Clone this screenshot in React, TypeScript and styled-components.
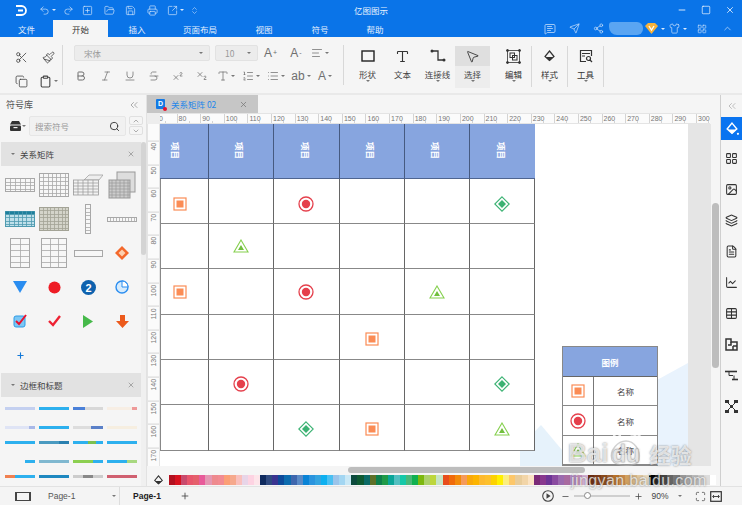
import React from 'react';
import styled, { createGlobalStyle } from 'styled-components';
import {
  Undo2, Redo2, SquarePlus, FolderOpen, Save, Printer, SquareArrowOutUpRight, ChevronsUpDown, Minus, Square, X,
  MessageSquareText, Send, Share2, Shirt, LayoutGrid, ChevronUp, ChevronDown, ChevronsLeft, Scissors, Paintbrush,
  Copy, Clipboard, Bold, Italic, Underline, Strikethrough, Superscript, Subscript, AlignLeft, List, ListOrdered,
  Type, MousePointer2, Search, Image, Layers, FileText, LineChart, Table, Plus, Maximize,
} from 'lucide-react';

const GlobalStyle = createGlobalStyle`
  html, body { margin: 0; padding: 0; background: #fff; }
  * { box-sizing: border-box; }
  body { font-family: "Noto Sans CJK SC", "Liberation Sans", sans-serif; }
`;

const Screen = styled.div`
  position: relative;
  width: 742px;
  height: 505px;
  overflow: hidden;
  display: flex;
  flex-direction: column;
  background: #f5f5f5;
  color: #444;
  font-size: 8.5px;
`;

/* ---- title bar ---- */
const TopBar = styled.div`
  height: 20px;
  background: #0a74e8;
  color: #fff;
  display: grid;
  grid-template-columns: 1fr auto 1fr;
  align-items: center;
`;
const QuickTools = styled.div`
  display: flex;
  align-items: center;
  padding-left: 13px;
`;
const QuickBtn = styled.span<{ $w?: number }>`
  width: ${p => p.$w ?? 21.5}px;
  display: flex;
  align-items: center;
  justify-content: center;
  gap: 2px;
  color: #cfe3fb;
`;
const AppTitle = styled.div`
  font-size: 8.5px;
  color: #e8f2fe;
`;
const WinControls = styled.div`
  display: flex;
  justify-content: flex-end;
  gap: 14px;
  padding-right: 7px;
  color: #fff;
`;
const Caret = styled.i<{ $light?: boolean }>`
  display: inline-block;
  width: 0;
  height: 0;
  border-left: 2px solid transparent;
  border-right: 2px solid transparent;
  border-top: 2.5px solid ${p => (p.$light ? '#dcebfd' : '#777')};
`;

const MenuBar = styled.div`
  height: 17px;
  background: #0a74e8;
  display: flex;
  align-items: stretch;
`;
const MenuTab = styled.div<{ $w: number; $active?: boolean }>`
  width: ${p => p.$w}px;
  display: flex;
  align-items: center;
  justify-content: center;
  font-size: 8.5px;
  color: ${p => (p.$active ? '#333' : '#e4effd')};
  background: ${p => (p.$active ? '#f5f5f5' : 'transparent')};
`;
const MenuRight = styled.div`
  margin-left: auto;
  display: flex;
  align-items: center;
  padding-right: 1px;
  color: #cfe3fb;
`;
const MenuIcon = styled.span<{ $w?: number }>`
  width: ${p => p.$w ?? 25}px;
  display: flex;
  align-items: center;
  justify-content: center;
  gap: 3px;
`;
const Blurred = styled.span`
  width: 34px;
  height: 13px;
  margin: 0 1px 0 -1px;
  border-radius: 3px 6px 6px 8px;
  background: #5aa5f2;
`;

/* ---- ribbon ---- */
const Ribbon = styled.div`
  height: 58px;
  padding-bottom: 2px;
  display: flex;
  background: #f5f5f5;
  border-bottom: 2px solid #e9e9e9;
`;
const ClipGroup = styled.div`
  width: 63px;
  margin: 8px 0 6px;
  padding-left: 8px;
  border-right: 1px solid #d8d8d8;
  display: grid;
  grid-template-columns: 26px 28px;
  grid-auto-rows: 24px;
  align-items: center;
  justify-items: center;
`;
const RibbonBtn = styled.span<{ $w?: number; $pale?: boolean }>`
  width: ${p => (p.$w ? `${p.$w}px` : 'auto')};
  display: flex;
  align-items: center;
  justify-content: center;
  gap: 2px;
  font: 12px "Liberation Sans", sans-serif;
  color: ${p => (p.$pale ? '#6f6f6f' : '#444')};
  sup { font-size: 7px; line-height: 0; margin-left: -1px; }
`;
const FontGroup = styled.div`
  width: 281px;
  margin: 8px 0 6px;
  padding-left: 6px;
  border-right: 1px solid #d8d8d8;
  display: flex;
  flex-direction: column;
  gap: 7px;
`;
const FontRow = styled.div`
  height: 16px;
  display: flex;
  align-items: center;
`;
const SelectBox = styled.div<{ $w: number; $ml?: number }>`
  width: ${p => p.$w}px;
  height: 16px;
  margin-left: ${p => p.$ml ?? 0}px;
  padding: 0 6px 0 9px;
  background: #ececec;
  border: 1px solid #e2e2e2;
  border-radius: 2px;
  display: flex;
  align-items: center;
  justify-content: space-between;
  color: #999;
  font-size: 8.5px;
`;
const BigTools = styled.div`
  display: flex;
  padding: 9px 0 0 6px;
  width: 152px;
`;
const BigTool = styled.div<{ $w?: number; $active?: boolean }>`
  width: ${p => p.$w ?? 35}px;
  height: 42px;
  display: flex;
  flex-direction: column;
  align-items: center;
  font-size: 8.5px;
  color: #444;
  background: ${p => (p.$active ? '#ededed' : 'transparent')};
`;
const BigIcon = styled.span<{ $active?: boolean }>`
  align-self: stretch;
  height: 20px;
  display: flex;
  align-items: center;
  justify-content: center;
  color: #333;
  background: ${p => (p.$active ? '#dfdfdf' : 'transparent')};
`;
const BigLabel = styled.span`
  margin-top: 3px;
  line-height: 11px;
`;
const SideGroup = styled.div`
  width: 36px;
  margin-top: 9px;
  height: 41px;
  border-right: 1px solid #d8d8d8;
  display: flex;
  flex-direction: column;
  align-items: center;
  color: #333;
  font-size: 8.5px;
`;

/* ---- workspace ---- */
const Workspace = styled.div`
  flex: 1;
  min-height: 0;
  display: flex;
`;
const LeftPanel = styled.div`
  width: 147px;
  padding-left: 1px;
  border-right: 1px solid #e2e2e2;
  display: flex;
  flex-direction: column;
`;
const PanelTitle = styled.div`
  height: 19px;
  padding: 0 6px 0 5px;
  display: flex;
  align-items: center;
  justify-content: space-between;
  font-size: 9px;
  color: #555;
`;
const SearchRow = styled.div`
  height: 28px;
  padding: 2px 0 0 9px;
  display: flex;
  align-items: flex-start;
`;
const DrawerSlot = styled.span`
  height: 20px;
  display: flex;
  align-items: center;
  gap: 1px;
`;
const SearchBox = styled.div`
  width: 97px;
  height: 20px;
  margin-left: 3px;
  padding: 0 5px;
  background: #f1f1f1;
  border: 1px solid #e6e6e6;
  border-radius: 2px;
  display: flex;
  align-items: center;
  justify-content: space-between;
  color: #999;
`;
const Steppers = styled.div`
  margin-left: 3px;
  display: flex;
  flex-direction: column;
  gap: 1px;
`;
const Stepper = styled.span`
  width: 14px;
  height: 9px;
  border: 1px solid #e0e0e0;
  border-radius: 2px;
  display: flex;
  align-items: center;
  justify-content: center;
  color: #888;
`;
const PanelBody = styled.div`
  flex: 1;
  display: flex;
  min-height: 0;
`;
const PanelList = styled.div`
  width: 140px;
`;
const PanelScroll = styled.div`
  width: 5px;
  background: #f0f0f0;
`;
const PanelThumb = styled.div`
  height: 113px;
  background: #d4d4d4;
  border-radius: 3px;
`;
const SectionHead = styled.div`
  height: 24px;
  padding: 0 6px 0 10px;
  background: #e2e2e2;
  display: flex;
  align-items: center;
  gap: 5px;
  color: #444;
  font-size: 8.5px;
`;
const SectionClose = styled.span`
  margin-left: auto;
  display: flex;
  color: #888;
`;
const SymbolGrid = styled.div`
  padding: 2px 0 1px 2px;
  display: grid;
  grid-template-columns: repeat(4, 34px);
  grid-auto-rows: 34px;
  align-items: center;
  justify-items: center;
`;
const BorderGrid = styled.div`
  padding: 0 3px 0 4px;
  display: grid;
  grid-template-columns: repeat(4, 30px);
  grid-template-rows: 22px 16px 14px 24px 6px;
  column-gap: 4px;
  align-items: center;
`;
const Strip = styled.div`
  height: 3px;
  display: flex;
  align-items: stretch;
`;
const StripPart = styled.span<{ $c: string; $g: number }>`
  flex: ${p => p.$g};
  background: ${p => p.$c};
`;

const CenterColumn = styled.div`
  width: 573px;
  display: flex;
  flex-direction: column;
`;
const DocTabs = styled.div`
  height: 18px;
  display: flex;
`;
const DocTab = styled.div`
  width: 111px;
  background: #c6c6c6;
  padding: 0 10px 0 9px;
  display: flex;
  align-items: center;
  color: #1f86ea;
  font-size: 8.5px;
`;
const DocIcon = styled.span`
  position: relative;
  width: 9px;
  height: 10px;
  margin-right: 6px;
  border-radius: 1px;
  background: #1479e4;
  color: #fff;
  font: bold 7px/10px "Liberation Sans", sans-serif;
  text-align: center;
  &::after {
    content: '';
    position: absolute;
    right: -2px;
    bottom: -2px;
    width: 4px;
    height: 4px;
    border-radius: 50%;
    background: #e8112d;
  }
`;
const DocClose = styled.span`
  margin-left: auto;
  display: flex;
  color: #777;
`;
const RulerRow = styled.div`
  height: 11px;
  display: flex;
  background: #f5f5f5;
`;
const RulerCorner = styled.div`
  width: 13px;
  background: #ededed;
`;
const HRuler = styled.div`
  width: 550px;
  overflow: hidden;
  display: flex;
  background: #fbfbfb;
  border-top: 1px solid #e4e4e4;
  border-bottom: 1px solid #e4e4e4;
`;
const HTick = styled.span`
  position: relative;
  flex: 0 0 23.62px;
  padding-left: 1px;
  border-left: 1px solid #d4d4d4;
  font: 7px/9px "Liberation Sans", sans-serif;
  color: #777;
  &:first-child { margin-left: -7px; }
  &::after {
    content: '';
    position: absolute;
    left: 11px;
    bottom: 0;
    height: 2px;
    border-left: 1px solid #d4d4d4;
  }
`;
const CanvasRow = styled.div`
  flex: 1;
  min-height: 0;
  display: flex;
`;
const VRuler = styled.div`
  width: 13px;
  overflow: hidden;
  background: #fbfbfb;
  border-right: 1px solid #e4e4e4;
  border-left: 1px solid #e4e4e4;
`;
const VTick = styled.span`
  display: block;
  height: 23.62px;
  border-bottom: 1px solid #d4d4d4;
  writing-mode: vertical-rl;
  transform: rotate(180deg);
  font: 7px/11px "Liberation Sans", sans-serif;
  color: #777;
  text-align: right;
  padding-bottom: 1px;
  &:first-child { margin-top: 17px; }
`;
const Page = styled.div`
  position: relative;
  width: 528px;
  overflow: hidden;
  background: #fff;
`;
const PaleShapes = styled.svg`
  position: absolute;
  inset: 0;
`;
const Matrix = styled.div`
  position: relative;
  width: 375px;
  display: grid;
  grid-template-columns: 49px 65px 66px 65px 65px 65px;
  grid-template-rows: 55px 45px 45px 46px 45px 45px 46px;
`;
const HeadCell = styled.div`
  background: #87a5df;
  border-right: 1px solid #465a80;
  border-bottom: 1px solid #4f6590;
  display: flex;
  align-items: center;
  justify-content: center;
  padding-right: 17px;
  &:nth-child(n + 2) { padding-right: 2px; }
  &:nth-child(6) { border-right: 0; }
`;
const HeadText = styled.span`
  writing-mode: vertical-rl;
  text-orientation: sideways;
  color: #fff;
  font-size: 8.5px;
  font-weight: 700;
`;
const Cell = styled.div<{ $first: boolean; $dy: number }>`
  background: #fff;
  border-left: ${p => (p.$first ? '1px solid #888' : '0')};
  border-right: 1px solid #666;
  border-bottom: 1px solid #888;
  display: flex;
  align-items: center;
  justify-content: center;
  padding-right: ${p => (p.$first ? 9 : 1)}px;
  padding-top: ${p => p.$dy}px;
`;
const Legend = styled.div`
  position: absolute;
  left: 402px;
  top: 222px;
  width: 96px;
  display: grid;
  grid-template-columns: 31px 63px;
  grid-template-rows: 30px 29px 30px 29px;
  border: 1px solid #888;
`;
const LegendHead = styled.div`
  grid-column: 1 / 3;
  background: #87a5df;
  border-bottom: 1px solid #666;
  display: flex;
  align-items: center;
  justify-content: center;
  color: #fff;
  font-weight: 700;
  font-size: 8.5px;
`;
const LegendMark = styled.div`
  background: #fff;
  border-right: 1px solid #777;
  border-bottom: 1px solid #888;
  display: flex;
  align-items: center;
  justify-content: center;
`;
const LegendName = styled.div`
  background: #fff;
  border-bottom: 1px solid #888;
  display: flex;
  align-items: center;
  justify-content: center;
  color: #444;
  font-size: 8.5px;
`;
const Gutter = styled.div`
  width: 23px;
  background: #e5e5e5;
`;
const VScroll = styled.div`
  width: 9px;
  padding: 79px 1px 0 1px;
  background: #f5f5f5;
`;
const VThumb = styled.div`
  height: 165px;
  background: #bdbdbd;
  border-radius: 4px;
`;
const HScroll = styled.div`
  height: 8px;
  padding: 1px 0 0 201px;
  background: #f5f5f5;
`;
const HThumb = styled.div`
  width: 237px;
  height: 6px;
  background: #bdbdbd;
  border-radius: 3px;
`;
const ColorBar = styled.div`
  height: 12px;
  display: flex;
  align-items: center;
`;
const BucketSlot = styled.span`
  width: 22px;
  display: flex;
  justify-content: center;
  color: #333;
`;
const Swatch = styled.span<{ $c: string }>`
  width: 6.08px;
  height: 10px;
  background: ${p => p.$c};
`;

const RightRail = styled.div`
  width: 22px;
  border-left: 1px solid #cfcfcf;
  display: flex;
  flex-direction: column;
  align-items: center;
`;
const RailTop = styled.div`
  height: 22px;
  display: flex;
  align-items: center;
  color: #999;
`;
const RailItem = styled.div<{ $active?: boolean }>`
  align-self: stretch;
  height: ${p => (p.$active ? 23 : 31)}px;
  margin-bottom: ${p => (p.$active ? 3 : 0)}px;
  display: flex;
  align-items: center;
  justify-content: center;
  color: ${p => (p.$active ? '#fff' : '#333')};
  background: ${p => (p.$active ? '#0a74f0' : 'transparent')};
`;

/* ---- status bar ---- */
const StatusBar = styled.div`
  height: 19px;
  background: #f4f4f4;
  border-top: 1px solid #e2e2e2;
  display: flex;
  align-items: center;
  color: #444;
`;
const PagePicker = styled.div`
  width: 120px;
  height: 100%;
  padding: 0 3px 0 15px;
  border-right: 1px solid #ddd;
  display: flex;
  align-items: center;
  font: 8.5px "Liberation Sans", sans-serif;
  color: #555;
`;
const PageFrame = styled.span`
  width: 16px;
  height: 9px;
  margin-right: 17px;
  border: 1px solid #444;
  border-width: 1px 2px;
`;
const PageName = styled.span`
  flex: 1;
`;
const ActivePage = styled.span`
  margin-left: 13px;
  width: 47px;
  font: bold 8.5px "Liberation Sans", sans-serif;
  color: #222;
`;
const ZoomTools = styled.div`
  margin-left: auto;
  padding-right: 18px;
  display: flex;
  align-items: center;
`;
const ZoomSlot = styled.span<{ $w: number }>`
  width: ${p => p.$w}px;
  display: flex;
  align-items: center;
  justify-content: center;
  font: 8.5px "Liberation Sans", sans-serif;
  color: #444;
`;
const ZoomTrack = styled.span`
  position: relative;
  width: 56px;
  height: 2px;
  background: #cfcfcf;
`;
const ZoomKnob = styled.span`
  position: absolute;
  left: 10px;
  top: -3px;
  width: 7px;
  height: 7px;
  border-radius: 50%;
  background: #fff;
  border: 1px solid #888;
`;

/* ---- watermark ---- */
const Watermark = styled.div`
  position: absolute;
  left: 568px;
  top: 425px;
  width: 150px;
  height: 65px;
  pointer-events: none;
  color: rgba(255, 255, 255, 0.72);
  text-shadow: 0 0 2px rgba(80, 80, 80, 0.7);
  font-family: "Liberation Sans", sans-serif;
`;
const MarkLine = styled.div`
  display: flex;
  align-items: flex-end;
  height: 43px;
  font-size: 26px;
  line-height: 30px;
  font-weight: 700;
`;
const MarkCjk = styled.span`
  margin-left: 7px;
  font: 700 21px/28px "Noto Sans CJK SC", sans-serif;
`;
const MarkUrl = styled.div`
  margin: 3px 0 0 3px;
  font-size: 16px;
  line-height: 19px;
  letter-spacing: 0.4px;
  white-space: nowrap;
`;

/* marks in the matrix */
type Kind = 's' | 'c' | 'd' | 't' | '';

const Mark = ({ k }: { k: Kind }) => {
  if (k === 's')
    return (
      <svg width="14" height="14" viewBox="0 0 14 14">
        <rect x="1" y="1" width="12" height="12" fill="#fff" stroke="#fb8c55" strokeWidth="1.2" />
        <rect x="3.5" y="3.5" width="7" height="7" fill="#fb8c55" />
      </svg>
    );
  if (k === 'c')
    return (
      <svg width="16" height="16" viewBox="0 0 16 16">
        <circle cx="8" cy="8" r="7" fill="#fff" stroke="#e5404c" strokeWidth="1.3" />
        <circle cx="8" cy="8" r="4.2" fill="#e5404c" />
      </svg>
    );
  if (k === 'd')
    return (
      <svg width="16" height="16" viewBox="0 0 16 16">
        <path d="M8 .8 15.2 8 8 15.2.8 8Z" fill="#fff" stroke="#3bb273" strokeWidth="1.1" />
        <path d="M8 4 12 8 8 12 4 8Z" fill="#3bb273" />
      </svg>
    );
  if (k === 't')
    return (
      <svg width="16" height="14" viewBox="0 0 16 14">
        <path d="M8 1 15 13H1Z" fill="#fff" stroke="#86d04f" strokeWidth="1.1" />
        <path d="M8 6 11 11H5Z" fill="#72bf3e" />
      </svg>
    );
  return null;
};

const GridThumb = ({ w, h, cols, rows, stroke = '#a8a8a8', fill = '#f7f7f7', head }: {
  w: number; h: number; cols: number; rows: number; stroke?: string; fill?: string; head?: string;
}) => (
  <svg width={w} height={h} viewBox={`0 0 ${w} ${h}`}>
    <rect x=".5" y=".5" width={w - 1} height={h - 1} fill={fill} stroke={stroke} />
    {head && <rect x=".5" y=".5" width={w - 1} height={3} fill={head} />}
    {Array.from({ length: cols - 1 }, (_, i) => {
      const x = Math.round(((i + 1) * w) / cols) + 0.5;
      return <line key={i} x1={x} x2={x} y1="0" y2={h} stroke={stroke} strokeWidth=".8" />;
    })}
    {Array.from({ length: rows - 1 }, (_, i) => {
      const y = Math.round(((i + 1) * h) / rows) + 0.5;
      return <line key={i} x1="0" x2={w} y1={y} y2={y} stroke={stroke} strokeWidth=".8" />;
    })}
  </svg>
);

const Stacked = () => (
  <svg width="28" height="28" viewBox="0 0 28 28">
    <rect x="9" y="1" width="18" height="20" fill="#ddd" stroke="#999" />
    <rect x="1" y="9" width="21" height="18" fill="#ccc" stroke="#999" />
    {[4, 8, 12, 16, 20].map(x => <line key={x} x1={x} x2={x} y1="9" y2="27" stroke="#999" strokeWidth=".7" />)}
    {[12, 15, 18, 21, 24].map(y => <line key={y} x1="1" x2="22" y1={y} y2={y} stroke="#999" strokeWidth=".7" />)}
  </svg>
);

const Skewed = () => (
  <svg width="30" height="22" viewBox="0 0 30 22">
    <path d="M11 6 16 1H30L26 6Z" fill="#eee" stroke="#999" strokeWidth=".7" />
    <rect x=".5" y="6" width="25" height="15" fill="#f2f2f2" stroke="#999" strokeWidth=".8" />
    {[5, 10, 15, 20].map(x => <line key={x} x1={x} x2={x} y1="6" y2="21" stroke="#999" strokeWidth=".7" />)}
    {[9, 12, 15, 18].map(y => <line key={y} x1="0" x2="25" y1={y} y2={y} stroke="#999" strokeWidth=".7" />)}
  </svg>
);

const EditIcon = () => (
  <svg width="15" height="15" viewBox="0 0 15 15" fill="none" stroke="#333">
    <rect x="1.5" y="1.5" width="12" height="12" strokeWidth=".8" />
    <rect x="4" y="4" width="4.5" height="4.5" strokeWidth="1" />
    <rect x="6.5" y="6.5" width="4.5" height="4.5" strokeWidth="1" />
    {[1.5, 13.5].map(x => [1.5, 13.5].map(y => <circle key={`${x}${y}`} cx={x} cy={y} r="1" fill="#333" />))}
  </svg>
);

const ToolIcon = () => (
  <svg width="14" height="14" viewBox="0 0 14 14" fill="none" stroke="#333" strokeWidth="1.2">
    <path d="M7 12.5H1.5V1.5H12.5V7" />
    <path d="M3 4.5H11M3 7H6" strokeWidth="1" />
    <circle cx="9.5" cy="9.5" r="2" />
    <path d="M11 11 13 13" />
  </svg>
);

const BlockIcon = () => (
  <svg width="13" height="13" viewBox="0 0 13 13" fill="none" stroke="currentColor" strokeWidth="1.5">
    <path d="M1 1H6V4H12V12H1Z" />
    <path d="M6 4V7H3M8 8V12M8 8H12" />
  </svg>
);

const StepIcon = () => (
  <svg width="13" height="13" viewBox="0 0 13 13" fill="none" stroke="currentColor" strokeWidth="1.6">
    <path d="M0 2.5H12" />
    <path d="M4 2.5V6.5H8" strokeWidth="1" />
    <path d="M7 10.5H13" />
    <path d="M9 6.5V10.5" strokeWidth="1" />
  </svg>
);

const LinkIcon = () => (
  <svg width="13" height="13" viewBox="0 0 13 13" fill="currentColor">
    <path d="M2 2 11 11M11 2 2 11" stroke="currentColor" strokeWidth="1" />
    <rect x="0" y="0" width="4" height="3" />
    <rect x="9" y="0" width="4" height="3" />
    <rect x="0" y="10" width="4" height="3" />
    <rect x="9" y="10" width="4" height="3" />
    <rect x="5" y="5" width="3" height="3" />
  </svg>
);

const symbols: React.ReactNode[] = [
  <GridThumb w={30} h={14} cols={6} rows={4} />,
  <GridThumb w={30} h={24} cols={7} rows={6} />,
  <Skewed />,
  <Stacked />,
  <GridThumb w={30} h={16} cols={7} rows={5} stroke="#4f9bb0" fill="#bfe0ea" head="#1d7f9c" />,
  <GridThumb w={30} h={24} cols={8} rows={7} stroke="#a3a396" fill="#d4d4ca" />,
  <GridThumb w={6} h={30} cols={1} rows={8} />,
  <GridThumb w={30} h={5} cols={10} rows={1} />,
  <GridThumb w={20} h={30} cols={2} rows={5} />,
  <GridThumb w={26} h={30} cols={3} rows={5} />,
  <GridThumb w={29} h={7} cols={1} rows={1} />,
  <svg width="14" height="14" viewBox="0 0 14 14">
    <path d="M7 0 14 7 7 14 0 7Z" fill="#f4682b" />
    <path d="M7 3.5 10.5 7 7 10.5 3.5 7Z" fill="#fdd0b0" />
  </svg>,
  <svg width="14" height="12" viewBox="0 0 14 12"><path d="M0 0H14L7 12Z" fill="#2a8df0" /></svg>,
  <svg width="13" height="13" viewBox="0 0 14 14"><circle cx="7" cy="7" r="6.5" fill="#ee1c25" /></svg>,
  <svg width="15" height="15" viewBox="0 0 15 15">
    <circle cx="7.5" cy="7.5" r="7.5" fill="#0f62ae" />
    <text x="7.5" y="11.5" textAnchor="middle" fontSize="11" fontWeight="700" fill="#fff" fontFamily="Liberation Sans">2</text>
  </svg>,
  <svg width="14" height="14" viewBox="0 0 14 14">
    <circle cx="7" cy="7" r="6" fill="#d6ebfc" stroke="#2a8df0" strokeWidth="1.4" />
    <path d="M7 7V1A6 6 0 0 1 13 7Z" fill="#fff" stroke="#2a8df0" />
  </svg>,
  <svg width="14" height="14" viewBox="0 0 14 14">
    <rect x="1" y="2" width="11" height="11" rx="2" fill="#7cc7f5" stroke="#2d9be5" />
    <path d="M3 7 6 10 13 1" fill="none" stroke="#e8112d" strokeWidth="2" />
  </svg>,
  <svg width="13" height="12" viewBox="0 0 13 12"><path d="M1 6 5 10 12 1" fill="none" stroke="#ee2233" strokeWidth="2.4" /></svg>,
  <svg width="10" height="13" viewBox="0 0 10 13"><path d="M0 0 10 6.5 0 13Z" fill="#46b94a" /></svg>,
  <svg width="13" height="13" viewBox="0 0 13 13"><path d="M4 0H9V6H13L6.5 13 0 6H4Z" fill="#ec5a1c" /></svg>,
  <Plus size={9} strokeWidth={3} color="#1479d8" />,
];

const B = '#2db0ee';
const stripes: [string, number][][] = [
  [['#c4d0f0', 1]],
  [[B, 1]],
  [['#4a80d8', 2], ['#d8d8d8', 3]],
  [['#f7eee4', 5], ['#e99', 1]],
  [['#dfe4f5', 4], ['#a8b8e8', 1]],
  [[B, 1]],
  [['#ddd', 3], ['#5a80c8', 2]],
  [['#f6eee0', 1]],
  [[B, 1]],
  [['#4a9ac0', 2], ['#2a80b0', 1]],
  [[B, 2], ['#7cc050', 1], [B, 1]],
  [[B, 1]],
  [['#f5f5f5', 2], [B, 1]],
  [['#80b8d0', 1]],
  [['#8ccf50', 2], [B, 1]],
  [[B, 2], ['#a8d880', 1]],
  [['#f08050', 1], [B, 2]],
  [['#1f88c0', 1]],
  [['#ccc', 1], ['#888', 1], ['#ccc', 1]],
  [['#d06070', 1]],
];

const reds = ['#b3101f', '#d8121f', '#c94a6d', '#e8566c', '#e5606c', '#e85b9a', '#e497b3', '#ee8a8e', '#f28b92', '#fb9f76', '#f6a98d', '#f9c0bd', '#e8d5e8', '#fdd3e2', '#fde5ea'];
const blues = ['#0f2a5e', '#2f4a80', '#3a3490', '#0d4a9a', '#0c6bae', '#3e66ad', '#5a8ac6', '#0a83d6', '#2a94de', '#34a4e0', '#0db0f0', '#4ac0f2', '#9bc4ea', '#a3d6f2', '#c9e8f6'];
const greens = ['#0b4a3c', '#0e5a32', '#0b6a66', '#5e7028', '#0e7f4c', '#1f9a48', '#0aa598', '#52bfc0', '#14c8a8', '#48b878', '#10b050', '#7cb80e', '#acd16a', '#bdd63c', '#c6e4c4'];
const oranges = ['#e84d1c', '#f06a0a', '#f28a0a', '#f59a5a', '#f9a80a', '#fcb400', '#fdb92e', '#fdc02c', '#fdd200', '#fff000', '#fbee7e', '#fdc76a', '#e8cc9a', '#f2d5a8', '#fbe3c4'];
const purples = ['#7a2a78', '#88388e', '#6d3596', '#8a4ba0', '#9b6aae', '#a86aa0', '#b28ac0', '#c48fbb', '#d4b0d4'];
const browns = ['#6b2c10', '#7d3a18', '#8a4a1a', '#a06030', '#b8722a', '#c98a4a', '#d0a060', '#d8b888', '#e0c8a0', '#eadcc0'];
const grays = ['#000', '#222', '#444', '#666', '#777', '#999', '#aaa', '#bbb', '#ccc', '#ddd', '#fff'];
const palette = [...reds, ...blues, ...greens, ...oranges, ...purples, ...browns, ...grays];

const matrix: Kind[][] = [
  ['s', '', 'c', '', '', 'd'],
  ['', 't', '', '', '', ''],
  ['s', '', 'c', '', 't', ''],
  ['', '', '', 's', '', ''],
  ['', 'c', '', '', '', 'd'],
  ['', '', 'd', 's', '', 't'],
];
const rowNudge = [5, 0, 0, 3, 4, 2];

const menus: [string, number][] = [['插入', 58], ['页面布局', 68], ['视图', 60], ['符号', 52], ['帮助', 58]];
const I = 1.5;
const R = 1.9;

export default function App() {
  return (
    <Screen>
      <GlobalStyle />
      <TopBar>
        <QuickTools>
          <QuickBtn $w={16}>
            <svg width="12" height="11" viewBox="0 0 12 11">
              <path d="M1 1H6.5A4.5 4.5 0 0 1 6.5 10H1M3 5.5H8" fill="none" stroke="#fff" strokeWidth="1.8" />
            </svg>
          </QuickBtn>
          <QuickBtn $w={6} />
          <QuickBtn $w={24}><Undo2 size={11} strokeWidth={I} /><Caret $light /></QuickBtn>
          <QuickBtn $w={18}><Redo2 size={11} strokeWidth={I} /></QuickBtn>
          <QuickBtn><SquarePlus size={11} strokeWidth={I} /></QuickBtn>
          <QuickBtn><FolderOpen size={11} strokeWidth={I} /></QuickBtn>
          <QuickBtn><Save size={11} strokeWidth={I} /></QuickBtn>
          <QuickBtn><Printer size={11} strokeWidth={I} /></QuickBtn>
          <QuickBtn $w={24}><SquareArrowOutUpRight size={11} strokeWidth={I} /><Caret $light /></QuickBtn>
          <QuickBtn $w={14}><ChevronsUpDown size={9} strokeWidth={I} /></QuickBtn>
        </QuickTools>
        <AppTitle>亿图图示</AppTitle>
        <WinControls>
          <Minus size={10} strokeWidth={2} />
          <Square size={10} strokeWidth={1.6} />
          <X size={10} strokeWidth={1.8} />
        </WinControls>
      </TopBar>
      <MenuBar>
        <MenuTab $w={53}>文件</MenuTab>
        <MenuTab $w={55} $active>开始</MenuTab>
        {menus.map(([label, w]) => <MenuTab key={label} $w={w}>{label}</MenuTab>)}
        <MenuRight>
          <MenuIcon><MessageSquareText size={12} strokeWidth={I} /></MenuIcon>
          <MenuIcon><Send size={11} strokeWidth={I} /></MenuIcon>
          <MenuIcon $w={23}><Share2 size={11} strokeWidth={I} /></MenuIcon>
          <Blurred />
          <MenuIcon $w={22}>
            <svg width="13" height="11" viewBox="0 0 13 11">
              <path d="M3 0H10L13 3 6.5 11 0 3Z" fill="#f7b23b" />
              <path d="M4 3 6.5 7 9 3" fill="none" stroke="#fff" strokeWidth="1.3" />
            </svg>
            <Caret $light />
          </MenuIcon>
          <MenuIcon $w={24}><Shirt size={11} strokeWidth={I} /><Caret $light /></MenuIcon>
          <MenuIcon $w={24}><LayoutGrid size={10} strokeWidth={I} /></MenuIcon>
          <MenuIcon $w={27}><ChevronUp size={11} strokeWidth={I} /></MenuIcon>
        </MenuRight>
      </MenuBar>

      <Ribbon>
        <ClipGroup>
          <RibbonBtn><Scissors size={13} strokeWidth={I} /></RibbonBtn>
          <RibbonBtn><Paintbrush size={13} strokeWidth={I} /></RibbonBtn>
          <RibbonBtn><Copy size={13} strokeWidth={I} /></RibbonBtn>
          <RibbonBtn><Clipboard size={13} strokeWidth={2} /><Caret /></RibbonBtn>
        </ClipGroup>
        <FontGroup>
          <FontRow>
            <SelectBox $w={136} $ml={5}>宋体<Caret /></SelectBox>
            <SelectBox $w={43} $ml={5}>10<Caret /></SelectBox>
            <RibbonBtn $w={25} $pale>A<sup>+</sup></RibbonBtn>
            <RibbonBtn $w={26} $pale>A<sup>-</sup></RibbonBtn>
            <RibbonBtn $w={22} $pale><AlignLeft size={12} strokeWidth={I} /><Caret /></RibbonBtn>
          </FontRow>
          <FontRow>
            <RibbonBtn $w={24} $pale><Bold size={12} strokeWidth={2} /></RibbonBtn>
            <RibbonBtn $w={25} $pale><Italic size={12} strokeWidth={I} /></RibbonBtn>
            <RibbonBtn $w={24} $pale><Underline size={12} strokeWidth={I} /></RibbonBtn>
            <RibbonBtn $w={24} $pale><Strikethrough size={12} strokeWidth={I} /></RibbonBtn>
            <RibbonBtn $w={24} $pale><Superscript size={12} strokeWidth={I} /></RibbonBtn>
            <RibbonBtn $w={24} $pale><Subscript size={12} strokeWidth={I} /></RibbonBtn>
            <RibbonBtn $w={24} $pale><Type size={12} strokeWidth={I} /><Caret /></RibbonBtn>
            <RibbonBtn $w={25} $pale><ListOrdered size={12} strokeWidth={I} /><Caret /></RibbonBtn>
            <RibbonBtn $w={26} $pale><List size={12} strokeWidth={I} /><Caret /></RibbonBtn>
            <RibbonBtn $w={24} $pale>ab<Caret /></RibbonBtn>
            <RibbonBtn $w={24} $pale>A<Caret /></RibbonBtn>
          </FontRow>
        </FontGroup>
        <BigTools>
          <BigTool>
            <BigIcon>
              <svg width="14" height="14" viewBox="0 0 14 14"><rect x="1" y="2" width="12" height="10" fill="none" stroke="#222" strokeWidth="1.4" /></svg>
            </BigIcon>
            <BigLabel>形状</BigLabel>
            <Caret />
          </BigTool>
          <BigTool>
            <BigIcon><Type size={15} strokeWidth={1.8} /></BigIcon>
            <BigLabel>文本</BigLabel>
          </BigTool>
          <BigTool>
            <BigIcon>
              <svg width="16" height="14" viewBox="0 0 16 14">
                <path d="M3 2H8V11H13" fill="none" stroke="#333" strokeWidth="1.3" />
                <circle cx="2" cy="2" r="1.5" fill="#333" />
                <circle cx="14" cy="11" r="1.5" fill="#333" />
              </svg>
            </BigIcon>
            <BigLabel>连接线</BigLabel>
            <Caret />
          </BigTool>
          <BigTool $active>
            <BigIcon $active><MousePointer2 size={15} strokeWidth={1.4} /></BigIcon>
            <BigLabel>选择</BigLabel>
            <Caret />
          </BigTool>
        </BigTools>
        <SideGroup>
          <BigIcon><EditIcon /></BigIcon>
          <BigLabel>编辑</BigLabel>
          <Caret />
        </SideGroup>
        <SideGroup>
          <BigIcon>
            <svg width="13" height="13" viewBox="0 0 13 13">
              <path d="M6.5 1 11 6.5 6.5 10.5 2 6.5Z" fill="none" stroke="#333" strokeWidth="1.2" />
              <path d="M2.5 7H10.5L6.5 11Z" fill="#333" />
            </svg>
          </BigIcon>
          <BigLabel>样式</BigLabel>
          <Caret />
        </SideGroup>
        <SideGroup>
          <BigIcon><ToolIcon /></BigIcon>
          <BigLabel>工具</BigLabel>
          <Caret />
        </SideGroup>
      </Ribbon>

      <Workspace>
        <LeftPanel>
          <PanelTitle>符号库<ChevronsLeft size={12} strokeWidth={1.2} color="#777" /></PanelTitle>
          <SearchRow>
            <DrawerSlot>
              <svg width="11" height="10" viewBox="0 0 11 10">
                <path d="M2 0H9L11 3.5H0Z" fill="#333" />
                <rect x="0" y="4.5" width="11" height="5.5" rx="1" fill="#333" />
                <rect x="3.5" y="6" width="4" height="1.2" fill="#f5f5f5" />
              </svg>
              <Caret />
            </DrawerSlot>
            <SearchBox>搜索符号<Search size={11} strokeWidth={2} color="#333" /></SearchBox>
            <Steppers>
              <Stepper><ChevronUp size={8} /></Stepper>
              <Stepper><ChevronDown size={8} /></Stepper>
            </Steppers>
          </SearchRow>
          <PanelBody>
            <PanelList>
              <SectionHead>
                <Caret />关系矩阵
                <SectionClose><X size={8} /></SectionClose>
              </SectionHead>
              <SymbolGrid>
                {symbols.map((s, i) => <React.Fragment key={i}>{s}</React.Fragment>)}
              </SymbolGrid>
              <SectionHead>
                <Caret />边框和标题
                <SectionClose><X size={8} /></SectionClose>
              </SectionHead>
              <BorderGrid>
                {stripes.map((parts, i) => (
                  <Strip key={i}>
                    {parts.map(([c, g], j) => <StripPart key={j} $c={c} $g={g} />)}
                  </Strip>
                ))}
              </BorderGrid>
            </PanelList>
            <PanelScroll><PanelThumb /></PanelScroll>
          </PanelBody>
        </LeftPanel>

        <CenterColumn>
          <DocTabs>
            <DocTab>
              <DocIcon>D</DocIcon>关系矩阵 02
              <DocClose><X size={9} /></DocClose>
            </DocTab>
          </DocTabs>
          <RulerRow>
            <RulerCorner />
            <HRuler>
              {Array.from({ length: 24 }, (_, i) => <HTick key={i}>{70 + i * 10}</HTick>)}
            </HRuler>
          </RulerRow>
          <CanvasRow>
            <VRuler>
              {Array.from({ length: 14 }, (_, i) => <VTick key={i}>{40 + i * 10}</VTick>)}
            </VRuler>
            <Page>
              <PaleShapes width="528" height="342" viewBox="0 0 528 342">
                <path d="M497 256 528 239V342H497Z" fill="#e9f3fd" />
                <path d="M360 323 381 301 402 326V342H360Z" fill="#e6f2fb" />
              </PaleShapes>
              <Matrix>
                {Array.from({ length: 6 }, (_, i) => (
                  <HeadCell key={i}><HeadText>项目</HeadText></HeadCell>
                ))}
                {matrix.map((row, r) =>
                  row.map((k, c) => (
                    <Cell key={`${r}-${c}`} $first={c === 0} $dy={rowNudge[r]}><Mark k={k} /></Cell>
                  )),
                )}
              </Matrix>
              <Legend>
                <LegendHead>图例</LegendHead>
                <LegendMark><Mark k="s" /></LegendMark>
                <LegendName>名称</LegendName>
                <LegendMark><Mark k="c" /></LegendMark>
                <LegendName>名称</LegendName>
                <LegendMark><Mark k="t" /></LegendMark>
                <LegendName>名称</LegendName>
              </Legend>
            </Page>
            <Gutter />
            <VScroll><VThumb /></VScroll>
          </CanvasRow>
          <HScroll><HThumb /></HScroll>
          <ColorBar>
            <BucketSlot>
              <svg width="11" height="11" viewBox="0 0 13 13">
                <path d="M6.5 1 11 6.5 6.5 10.5 2 6.5Z" fill="none" stroke="#333" strokeWidth="1.2" />
                <path d="M2.5 7H10.5L6.5 11Z" fill="#333" />
              </svg>
            </BucketSlot>
            {palette.map((c, i) => <Swatch key={i} $c={c} />)}
          </ColorBar>
        </CenterColumn>

        <RightRail>
          <RailTop><ChevronsLeft size={12} strokeWidth={1.2} /></RailTop>
          <RailItem $active>
            <svg width="14" height="14" viewBox="0 0 13 13">
              <path d="M6.5 1 11 6.5 6.5 10.5 2 6.5Z" fill="none" stroke="#fff" strokeWidth="1.3" />
              <path d="M2.5 7H10.5L6.5 11Z" fill="#fff" />
              <circle cx="12" cy="11" r="1" fill="#fff" />
            </svg>
          </RailItem>
          <RailItem><LayoutGrid size={13} strokeWidth={R} /></RailItem>
          <RailItem><Image size={13} strokeWidth={R} /></RailItem>
          <RailItem><Layers size={13} strokeWidth={R} /></RailItem>
          <RailItem><FileText size={13} strokeWidth={R} /></RailItem>
          <RailItem><LineChart size={13} strokeWidth={R} /></RailItem>
          <RailItem><Table size={13} strokeWidth={R} /></RailItem>
          <RailItem><BlockIcon /></RailItem>
          <RailItem><StepIcon /></RailItem>
          <RailItem><LinkIcon /></RailItem>
        </RightRail>
      </Workspace>

      <StatusBar>
        <PagePicker>
          <PageFrame />
          <PageName>Page-1</PageName>
          <Caret />
        </PagePicker>
        <ActivePage>Page-1</ActivePage>
        <Plus size={10} strokeWidth={2} />
        <ZoomTools>
          <ZoomSlot $w={16}>
            <svg width="12" height="12" viewBox="0 0 12 12">
              <circle cx="6" cy="6" r="5.3" fill="none" stroke="#444" strokeWidth="1.1" />
              <path d="M4.5 3.2 8.6 6 4.5 8.8Z" fill="#444" />
            </svg>
          </ZoomSlot>
          <ZoomSlot $w={18}><Minus size={9} strokeWidth={2} /></ZoomSlot>
          <ZoomTrack><ZoomKnob /></ZoomTrack>
          <ZoomSlot $w={16}><Plus size={9} strokeWidth={2} /></ZoomSlot>
          <ZoomSlot $w={28}>90%</ZoomSlot>
          <ZoomSlot $w={12}><Caret /></ZoomSlot>
          <ZoomSlot $w={6} />
          <ZoomSlot $w={16}><Maximize size={11} strokeWidth={1.6} /></ZoomSlot>
          <ZoomSlot $w={16}>
            <svg width="12" height="11" viewBox="0 0 12 11" fill="none" stroke="#333">
              <rect x=".7" y=".7" width="10.6" height="9.6" strokeWidth="1.2" />
              <path d="M3 5.5H9M4 4 2.6 5.5 4 7M8 4 9.4 5.5 8 7" strokeWidth=".9" />
            </svg>
          </ZoomSlot>
        </ZoomTools>
      </StatusBar>

      <Watermark>
        <MarkLine>
          Bai
          <svg width="34" height="42" viewBox="0 0 34 42">
            <g fill="none" stroke="rgba(255,255,255,.8)" strokeWidth="2.5">
              <ellipse cx="9" cy="8" rx="3" ry="4" />
              <ellipse cx="16" cy="4" rx="3" ry="3.5" />
              <ellipse cx="24" cy="5" rx="3" ry="3.5" />
              <ellipse cx="29" cy="12" rx="3" ry="4" />
              <path d="M4 34C1 24 10 15 18 15C26 15 33 24 31 34C29 41 8 41 4 34Z" stroke="rgba(180,180,180,.6)" strokeWidth="1.5" />
            </g>
            <text x="18" y="36" textAnchor="middle" fontSize="23" fontWeight="700" fontFamily="Liberation Sans" fill="rgba(255,255,255,.75)" stroke="rgba(120,120,120,.4)" strokeWidth=".4">du</text>
          </svg>
          <MarkCjk>经验</MarkCjk>
        </MarkLine>
        <MarkUrl>jingyan.baidu.com</MarkUrl>
      </Watermark>
    </Screen>
  );
}
